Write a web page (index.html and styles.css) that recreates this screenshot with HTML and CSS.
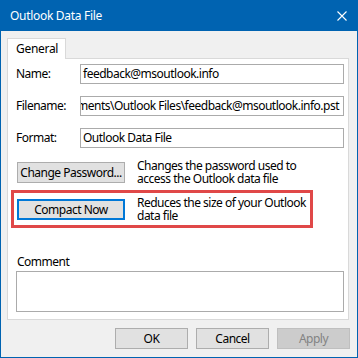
FILE: index.html
```html
<!DOCTYPE html>
<html lang="en">
<head>
    <meta charset="UTF-8">
    <meta name="viewport" content="width=device-width, initial-scale=1.0">
    <title>Outlook Data File</title>
    <link rel="stylesheet" href="styles.css">
</head>
<body>
<div class="window">
    <div class="titlebar">
        <span class="title">Outlook Data File</span>
        <svg class="close" width="10" height="10" viewBox="0 0 10 10">
            <path d="M0.5 0.5 L9.5 9.5 M9.5 0.5 L0.5 9.5" stroke="#fff" stroke-width="1.1" fill="none"/>
        </svg>
    </div>

    <div class="content">
        <div class="tabs">
            <div class="tab">General</div>
        </div>

        <div class="panel">
            <div class="fields">
                <div class="field">
                    <label class="field-label">Name:</label>
                    <div class="input">feedback@msoutlook.info</div>
                </div>
                <div class="field">
                    <label class="field-label">Filename:</label>
                    <div class="input input-end"><span>C:\Users\Robin\Documents\Outlook Files\feedback@msoutlook.info.pst</span></div>
                </div>
                <div class="field">
                    <label class="field-label">Format:</label>
                    <div class="input">Outlook Data File</div>
                </div>
            </div>

            <div class="action">
                <button type="button" class="button wide">Change Password...</button>
                <p class="action-text">Changes the password used to<br>access the Outlook data file</p>
            </div>

            <div class="action highlight">
                <button type="button" class="button wide focused">Compact Now</button>
                <p class="action-text">Reduces the size of your Outlook<br>data file</p>
            </div>

            <div class="comment">
                <label class="field-label">Comment</label>
                <div class="textarea"></div>
            </div>
        </div>

        <div class="footer">
            <button type="button" class="button">OK</button>
            <button type="button" class="button">Cancel</button>
            <button type="button" class="button disabled">Apply</button>
        </div>
    </div>
</div>
</body>
</html>
```

FILE: styles.css
```css
/* Windows 10 dialog */
:root {
    --accent: #0063B1;
    --face: #F0F0F0;
    --line: #D9D9D9;
    --edit-border: #ABABAB;
    --button-face: #E1E1E1;
    --button-border: #ADADAD;
    --focus: #0078D7;
    --mark: #E04848;
}

body {
    margin: 0;
    font-family: "Noto Sans", "Open Sans", sans-serif;
    font-size: 12px;
    letter-spacing: -0.5px;
    color: #000;
    background: #fff;
}

.window {
    width: 358px;
    height: 358px;
    box-sizing: border-box;
    border: 1px solid var(--accent);
    border-top: none;
    background: var(--face);
    display: flex;
    flex-direction: column;
}

.titlebar {
    height: 31px;
    margin: 0 -1px;
    padding: 0 11px 0 10px;
    background: var(--accent);
    color: #fff;
    display: flex;
    align-items: center;
    justify-content: space-between;
}

.title {
    font-size: 12px;
    line-height: 16px;
    letter-spacing: -0.3px;
}

.content {
    padding: 7px 8px 0 6px;
    display: flex;
    flex-direction: column;
}

.tabs {
    display: flex;
}

.tab {
    position: relative;
    z-index: 1;
    height: 21px;
    box-sizing: border-box;
    margin-bottom: -1px;
    padding: 2px 7px 0 8px;
    background: #fff;
    border: 1px solid var(--line);
    border-bottom: none;
    line-height: 16px;
    letter-spacing: -0.3px;
}

.panel {
    height: 262px;
    box-sizing: border-box;
    padding: 5px 4px 7px 8px;
    background: #fff;
    border: 1px solid var(--line);
    display: flex;
    flex-direction: column;
}

.fields {
    display: flex;
    flex-direction: column;
    gap: 12px;
}

.field {
    display: flex;
    align-items: center;
}

.field-label {
    width: 64px;
    flex-shrink: 0;
    line-height: 14px;
}

.input {
    flex: 1;
    height: 20px;
    box-sizing: border-box;
    padding: 0 4px 0 2px;
    border: 1px solid var(--edit-border);
    line-height: 18px;
    white-space: nowrap;
    overflow: hidden;
}

.input-end {
    display: flex;
    justify-content: flex-end;
}

.action {
    display: flex;
    align-items: center;
    gap: 12px;
    margin: 11px 0 0 1px;
}

.action-text {
    margin: 0;
    line-height: 13px;
    white-space: nowrap;
}

.highlight {
    width: 302px;
    box-sizing: border-box;
    margin: 5px 0 0 -5px;
    padding: 3px;
    border: 3px solid var(--mark);
}

.button {
    width: 73px;
    height: 21px;
    flex-shrink: 0;
    box-sizing: border-box;
    padding: 0;
    background: var(--button-face);
    border: 1px solid var(--button-border);
    font: inherit;
    letter-spacing: inherit;
    white-space: nowrap;
    color: #000;
}

.button.wide {
    width: 108px;
}

.button.focused {
    border: 2px solid var(--focus);
}

.button.disabled {
    background: #CCCCCC;
    border-color: #BFBFBF;
    color: #838383;
}

.comment {
    margin-top: auto;
    display: flex;
    flex-direction: column;
    gap: 2px;
}

.comment .field-label {
    margin-left: 1px;
}

.textarea {
    height: 41px;
    box-sizing: border-box;
    border: 1px solid var(--edit-border);
    background: #fff;
}

.footer {
    display: flex;
    justify-content: flex-end;
    gap: 8px;
    margin: 8px -1px 0 0;
}
```
